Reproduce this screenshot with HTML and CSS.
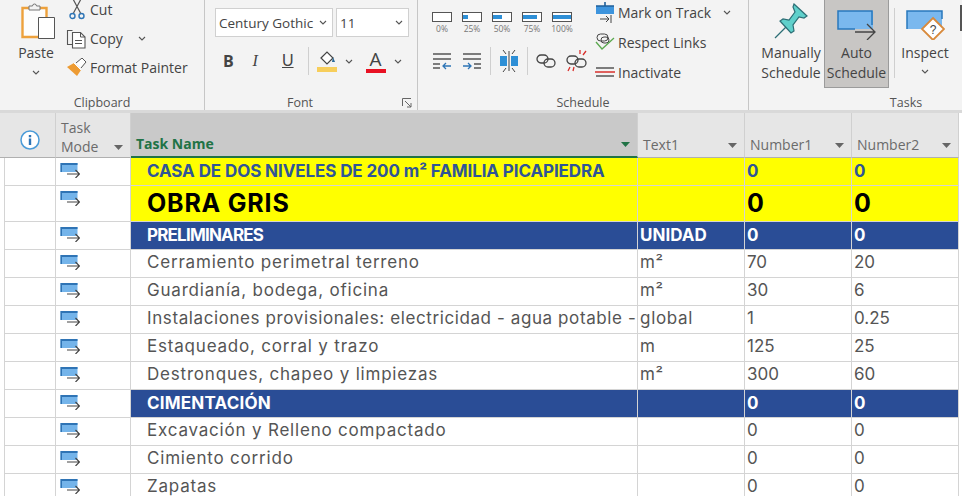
FILE: index.html
```html
<!DOCTYPE html>
<html lang="en">
<head>
    <meta charset="UTF-8">
    <title>Project - Task Sheet</title>
    <link rel="stylesheet" href="styles.css">
</head>
<body>
    <svg class="defs" width="0" height="0">
        <symbol id="mode" viewBox="0 0 20 16">
            <path d="M0.5 1h17v9h-17z" fill="#74b4ea"/>
            <path d="M0.5 1h17v2h-17zM0.5 1h1.500v9h-1.500z" fill="#2f74b5"/>
            <path d="M7 12h12.500M15.500 8l4 4-4 4" fill="none" stroke="#444" stroke-width="1.200"/>
        </symbol>
        <symbol id="chev" viewBox="0 0 8 5">
            <path d="M1 1l3 3 3-3" fill="none" stroke="#555" stroke-width="1.100"/>
        </symbol>
        <symbol id="sort" viewBox="0 0 9 5">
            <path d="M0 0h9L4.500 5z" fill="#666"/>
        </symbol>
    </svg>

    <div class="ribbon">
        <section class="group group-clipboard">
            <div class="group-body">
                <div class="big-btn paste-btn">
                    <svg class="paste-icon" width="34" height="37" viewBox="0 0 34 37">
                        <path d="M1.500 6h24v29h-24z" fill="#fdfdfd" stroke="#eda13c" stroke-width="2.400"/>
                        <path d="M8 8V4h3.500a2 2 0 0 1 4 0H19v4z" fill="#f3f3f3" stroke="#777"/>
                        <path d="M17.500 15.500h16v21h-16z" fill="#fff" stroke="#555"/>
                    </svg>
                    <span class="big-label">Paste</span>
                    <svg class="chev"><use href="#chev"/></svg>
                </div>
                <div class="small-col">
                    <div class="small-btn">
                        <svg width="16" height="21" viewBox="0 0 16 21"><path d="M4 0l7.500 14M12 0L4.500 14" stroke="#555" stroke-width="1.200" fill="none"/><circle cx="3.500" cy="17" r="2.500" fill="none" stroke="#2e75b6" stroke-width="1.400"/><circle cx="12.500" cy="17" r="2.500" fill="none" stroke="#2e75b6" stroke-width="1.400"/></svg>
                        <span>Cut</span>
                    </div>
                    <div class="small-btn">
                        <svg width="20" height="20" viewBox="0 0 20 20"><path d="M5.500 1.500H.5v14h5" fill="none" stroke="#555" stroke-width="1.100"/><path d="M5.500 3.500h8l4.500 4.500v11H5.500z" fill="#fff" stroke="#555" stroke-width="1.100"/><path d="M13.500 3.500V8H18M8 11.500h7M8 14.500h7" fill="none" stroke="#555"/></svg>
                        <span>Copy</span>
                        <svg class="chev chev-copy"><use href="#chev"/></svg>
                    </div>
                    <div class="small-btn">
                        <svg width="20" height="19" viewBox="0 0 20 19"><path d="M0 9l7-4 7 7-4 6z" fill="#ed9b33"/><path d="M7 5l7 7" stroke="#fff"/><path d="M9 5l6-5 4 4-5 6" fill="#fff" stroke="#555"/></svg>
                        <span>Format Painter</span>
                    </div>
                </div>
            </div>
            <div class="group-label">Clipboard</div>
        </section>

        <section class="group group-font">
            <div class="group-body font-body">
                <div class="combo-row">
                    <div class="combo combo-name"><span>Century Gothic</span><svg class="chev"><use href="#chev"/></svg></div>
                    <div class="combo combo-size"><span>11</span><svg class="chev"><use href="#chev"/></svg></div>
                </div>
                <div class="format-row">
                    <span class="fmt fmt-b">B</span>
                    <span class="fmt fmt-i">I</span>
                    <span class="fmt fmt-u">U</span>
                    <i class="vsep"></i>
                    <svg class="fill-icon" width="20" height="24" viewBox="0 0 20 24"><path d="M4 9l6-6 6 6-6 6z" fill="#fff" stroke="#444" stroke-width="1.200"/><path d="M16 8l2 5h-3z" fill="#2b6a99"/><path d="M0 18h20v5H0z" fill="#f7ce5b"/></svg>
                    <svg class="chev"><use href="#chev"/></svg>
                    <span class="font-color">A</span>
                    <svg class="chev"><use href="#chev"/></svg>
                </div>
            </div>
            <div class="group-label">Font
                <svg class="launcher" width="10" height="10" viewBox="0 0 10 10"><path d="M.5 8V.5H9M3 3l6 6M9 5v4H5" fill="none" stroke="#666"/></svg>
            </div>
        </section>

        <section class="group group-schedule">
            <div class="group-body schedule-body">
                <div class="schedule-left">
                    <div class="pct-row">
                        <div class="pct"><i class="bar"></i><span>0%</span></div>
                        <div class="pct"><i class="bar"><b class="p25"></b></i><span>25%</span></div>
                        <div class="pct"><i class="bar"><b class="p50"></b></i><span>50%</span></div>
                        <div class="pct"><i class="bar"><b class="p75"></b></i><span>75%</span></div>
                        <div class="pct"><i class="bar"><b class="p100"></b></i><span>100%</span></div>
                    </div>
                    <div class="tool-row">
                        <svg width="20" height="18" viewBox="0 0 20 18"><path d="M1 2h18M1 7h18M1 12h7M1 16h7" stroke="#555" stroke-width="1.400"/><path d="M19 14h-8M14 11l-3 3 3 3" stroke="#2e75b6" stroke-width="1.300" fill="none"/></svg>
                        <svg class="tool-gap" width="20" height="18" viewBox="0 0 20 18"><path d="M1 2h18M1 7h18M12 12h7M12 16h7" stroke="#555" stroke-width="1.400"/><path d="M1 14h8M6 11l3 3-3 3" stroke="#2e75b6" stroke-width="1.300" fill="none"/></svg>
                        <i class="vsep"></i>
                        <svg width="20" height="24" viewBox="0 0 20 24"><path d="M1 7h7v10H1zM12 7h7v10h-7z" fill="#2e8fd6"/><path d="M4 1l3 4M16 1l-3 4M4 23l3-4M16 23l-3-4M10 2v20" stroke="#444"/></svg>
                        <i class="vsep"></i>
                        <svg class="link-icon" width="20" height="14" viewBox="0 0 20 14"><rect x="1" y="1" width="11" height="8" rx="4" fill="none" stroke="#444" stroke-width="1.300"/><rect x="8" y="5" width="11" height="8" rx="4" fill="none" stroke="#444" stroke-width="1.300"/></svg>
                        <svg class="break-icon" width="22" height="22" viewBox="0 0 22 22"><rect x="1" y="6" width="11" height="8" rx="4" fill="none" stroke="#444" stroke-width="1.300"/><rect x="9" y="9" width="11" height="8" rx="4" fill="none" stroke="#444" stroke-width="1.300"/><path d="M14 0v4M20 1l-3 4M2 21l2-4M7 21l1-4" stroke="#d9302c" stroke-width="1.300"/></svg>
                    </div>
                </div>
                <div class="small-col schedule-col">
                    <div class="small-btn">
                        <svg width="20" height="21" viewBox="0 0 20 21"><path d="M1 4h18v8H1z" fill="#3d94dd"/><path d="M1 4h18M10 0v4" stroke="#1f5f99" stroke-width="1.600"/><path d="M5 17h9M11 14l3 3-3 3M16 13v8" stroke="#444" fill="none"/></svg>
                        <span>Mark on Track</span>
                        <svg class="chev chev-track"><use href="#chev"/></svg>
                    </div>
                    <div class="small-btn">
                        <svg width="20" height="18" viewBox="0 0 20 18"><rect x="2" y="1" width="11" height="7" rx="3.500" fill="none" stroke="#444"/><rect x="6" y="4" width="8" height="6" rx="3" fill="none" stroke="#444"/><path d="M1 9l6 7L19 5" fill="none" stroke="#5aa84e" stroke-width="1.300"/></svg>
                        <span>Respect Links</span>
                    </div>
                    <div class="small-btn">
                        <svg width="20" height="12" viewBox="0 0 20 12"><path d="M1 2h18M1 10h18" stroke="#555" stroke-width="1.500"/><path d="M0 6h20" stroke="#d9302c" stroke-width="1.500"/></svg>
                        <span>Inactivate</span>
                    </div>
                </div>
            </div>
            <div class="group-label">Schedule</div>
        </section>

        <section class="group group-tasks">
            <div class="group-body tasks-body">
                <div class="big-btn manual-btn">
                    <svg class="pin-icon" width="34" height="36" viewBox="0 0 34 36"><path d="M20 1l13 12-3 2-5-1-6 8 1 6-3 2L6 18l3-2 6 1 6-8-2-5z" fill="#5fd0cb" stroke="#2c6e75" stroke-width="1.200"/><path d="M12 24L1 35" stroke="#2c6e75" stroke-width="1.200"/></svg>
                    <span class="big-label">Manually<br>Schedule</span>
                </div>
                <div class="big-btn auto-btn">
                    <svg class="sched-icon" width="39" height="30" viewBox="0 0 39 30"><path d="M1 1h35v18H1z" fill="#7ab8ee"/><path d="M18 19H1V1h34v14" fill="none" stroke="#2878bd" stroke-width="1.500"/><path d="M18 22h20M30 14l8 8-8 8" fill="none" stroke="#444" stroke-width="1.300"/></svg>
                    <span class="big-label">Auto<br>Schedule</span>
                </div>
                <i class="vsep"></i>
                <div class="big-btn inspect-btn">
                    <svg class="sched-icon" width="39" height="30" viewBox="0 0 39 30"><path d="M1 1h35v18H1z" fill="#7ab8ee"/><path d="M1 19V1h35v8" fill="none" stroke="#2878bd" stroke-width="1.500"/><path d="M27 8l11 11-11 11-11-11z" fill="#fff" stroke="#d88a3c" stroke-width="1.800"/><text x="27" y="23.500" font-size="12" text-anchor="middle" fill="#444" font-family="Liberation Sans">?</text></svg>
                    <span class="big-label">Inspect</span>
                    <svg class="chev"><use href="#chev"/></svg>
                </div>
                <i class="cut-icon"></i>
            </div>
            <div class="group-label">Tasks</div>
        </section>
    </div>

    <div class="sheet">
        <div class="row head">
            <div class="cell c-info">
                <svg width="20" height="20" viewBox="0 0 20 20"><circle cx="10" cy="10" r="9" fill="#fff" stroke="#4a9bd8" stroke-width="1.500"/><rect x="8.800" y="8.500" width="2.400" height="6.500" fill="#2e75b6"/><rect x="8.800" y="5" width="2.400" height="2.300" fill="#2e75b6"/></svg>
            </div>
            <div class="cell c-mode"><span>Task<br>Mode</span><svg class="sort"><use href="#sort"/></svg></div>
            <div class="cell c-name"><span>Task Name</span><svg class="sort sort-green" viewBox="0 0 9 5"><path d="M0 0h9L4.500 5z"/></svg></div>
            <div class="cell"><span>Text1</span><svg class="sort"><use href="#sort"/></svg></div>
            <div class="cell"><span>Number1</span><svg class="sort"><use href="#sort"/></svg></div>
            <div class="cell"><span>Number2</span><svg class="sort"><use href="#sort"/></svg></div>
        </div>

        <div class="row title">
            <div class="cell c-info"></div><div class="cell c-mode"><svg class="mode-icon"><use href="#mode"/></svg></div>
            <div class="cell c-name">CASA DE DOS NIVELES DE 200 m² FAMILIA PICAPIEDRA</div><div class="cell"></div><div class="cell">0</div><div class="cell">0</div>
        </div>
        <div class="row big">
            <div class="cell c-info"></div><div class="cell c-mode"><svg class="mode-icon"><use href="#mode"/></svg></div>
            <div class="cell c-name">OBRA GRIS</div><div class="cell"></div><div class="cell">0</div><div class="cell">0</div>
        </div>
        <div class="row phase">
            <div class="cell c-info"></div><div class="cell c-mode"><svg class="mode-icon"><use href="#mode"/></svg></div>
            <div class="cell c-name c-tight">PRELIMINARES</div><div class="cell">UNIDAD</div><div class="cell">0</div><div class="cell">0</div>
        </div>
        <div class="row plain">
            <div class="cell c-info"></div><div class="cell c-mode"><svg class="mode-icon"><use href="#mode"/></svg></div>
            <div class="cell c-name">Cerramiento perimetral terreno</div><div class="cell">m²</div><div class="cell">70</div><div class="cell">20</div>
        </div>
        <div class="row plain">
            <div class="cell c-info"></div><div class="cell c-mode"><svg class="mode-icon"><use href="#mode"/></svg></div>
            <div class="cell c-name">Guardianía, bodega, oficina</div><div class="cell">m²</div><div class="cell">30</div><div class="cell">6</div>
        </div>
        <div class="row plain">
            <div class="cell c-info"></div><div class="cell c-mode"><svg class="mode-icon"><use href="#mode"/></svg></div>
            <div class="cell c-name c-fit">Instalaciones provisionales: electricidad - agua potable -</div><div class="cell">global</div><div class="cell">1</div><div class="cell">0.25</div>
        </div>
        <div class="row plain">
            <div class="cell c-info"></div><div class="cell c-mode"><svg class="mode-icon"><use href="#mode"/></svg></div>
            <div class="cell c-name">Estaqueado, corral y trazo</div><div class="cell">m</div><div class="cell">125</div><div class="cell">25</div>
        </div>
        <div class="row plain">
            <div class="cell c-info"></div><div class="cell c-mode"><svg class="mode-icon"><use href="#mode"/></svg></div>
            <div class="cell c-name">Destronques, chapeo y limpiezas</div><div class="cell">m²</div><div class="cell">300</div><div class="cell">60</div>
        </div>
        <div class="row phase">
            <div class="cell c-info"></div><div class="cell c-mode"><svg class="mode-icon"><use href="#mode"/></svg></div>
            <div class="cell c-name">CIMENTACIÓN</div><div class="cell"></div><div class="cell">0</div><div class="cell">0</div>
        </div>
        <div class="row plain">
            <div class="cell c-info"></div><div class="cell c-mode"><svg class="mode-icon"><use href="#mode"/></svg></div>
            <div class="cell c-name">Excavación y Relleno compactado</div><div class="cell"></div><div class="cell">0</div><div class="cell">0</div>
        </div>
        <div class="row plain">
            <div class="cell c-info"></div><div class="cell c-mode"><svg class="mode-icon"><use href="#mode"/></svg></div>
            <div class="cell c-name">Cimiento corrido</div><div class="cell"></div><div class="cell">0</div><div class="cell">0</div>
        </div>
        <div class="row plain">
            <div class="cell c-info"></div><div class="cell c-mode"><svg class="mode-icon"><use href="#mode"/></svg></div>
            <div class="cell c-name">Zapatas</div><div class="cell"></div><div class="cell">0</div><div class="cell">0</div>
        </div>
    </div>
</body>
</html>
```

FILE: styles.css
```css
* {
    margin: 0;
    padding: 0;
    box-sizing: border-box;
}

html, body {
    height: 496px;
    overflow: hidden;
}

body {
    font-family: "Open Sans", "Noto Sans", sans-serif;
    font-size: 14px;
    color: #444;
    background: #fff;
}

.defs {
    position: absolute;
}

svg {
    display: block;
    flex: none;
}

/* ribbon */
.ribbon {
    display: flex;
    height: 113px;
    background: #f3f3f3;
    border-bottom: 3px solid #d9d9d9;
    overflow: hidden;
}

.group {
    display: flex;
    flex-direction: column;
    flex: none;
    height: 110px;
    border-right: 1px solid #c6c6c6;
}

.group-clipboard { width: 205px; }
.group-font { width: 213px; }
.group-schedule { width: 331px; }
.group-tasks { width: 314px; border-right: 0; }

.group-body {
    display: flex;
    height: 95px;
    flex: none;
}

.group-label {
    position: relative;
    text-align: center;
    font-size: 12.500px;
    line-height: 15px;
    color: #555;
}

.group-font .group-label {
    padding-right: 22px;
}

.launcher {
    position: absolute;
    right: 5px;
    top: 3px;
}

.big-btn {
    display: flex;
    flex-direction: column;
    align-items: center;
    flex: none;
}

.big-label {
    font-size: 14px;
    line-height: 20px;
    text-align: center;
    white-space: nowrap;
}

.chev {
    width: 8px;
    height: 5px;
}

.paste-btn {
    width: 44px;
    margin-left: 14px;
    padding-top: 2px;
}

.paste-icon {
    margin: 0 0 4px 4px;
}

.paste-btn .chev {
    margin-top: 7px;
}

.small-col {
    display: flex;
    flex-direction: column;
    margin-top: -5px;
}

.small-btn {
    display: flex;
    align-items: center;
    height: 29px;
    font-size: 14px;
    white-space: nowrap;
}

.small-btn > svg:first-child {
    width: 22px;
}

.group-clipboard .small-col {
    margin-left: 8px;
}

.small-btn > span {
    margin-left: 2px;
}

.chev-copy {
    margin-left: 15px;
}

/* font group */
.font-body {
    flex-direction: column;
    padding: 8px 0 0 10px;
}

.combo-row {
    display: flex;
    gap: 3px;
}

.combo {
    display: flex;
    align-items: center;
    justify-content: space-between;
    height: 29px;
    padding: 0 5px 0 3px;
    background: #fff;
    border: 1px solid #d0d0d0;
    font-size: 13.500px;
}

.combo-name { width: 118px; }
.combo-size { width: 73px; }

.format-row {
    display: flex;
    align-items: center;
    height: 26px;
    margin-top: 11px;
}

.fmt {
    width: 29.500px;
    padding-left: 8px;
    font-size: 16px;
    font-family: "Liberation Sans", sans-serif;
}

.fmt-b { font-weight: bold; font-family: "Open Sans", sans-serif; }
.fmt-i { font-style: italic; font-family: "Liberation Serif", serif; }
.fmt-u { text-decoration: underline; }

.vsep {
    display: block;
    flex: none;
    width: 1px;
    height: 28px;
    background: #cfcfcf;
}

.format-row .vsep {
    margin-left: 4px;
}

.fill-icon {
    margin-left: 8px;
}

.format-row .chev {
    margin-left: 8px;
}

.font-color {
    width: 20px;
    margin-left: 13px;
    border-bottom: 4px solid #e81123;
    font-size: 19px;
    line-height: 20px;
    text-align: center;
}

/* schedule group */
.schedule-body {
    padding-left: 14px;
}

.schedule-left {
    width: 162px;
}

.pct-row {
    display: flex;
    gap: 10px;
    padding-top: 12px;
}

.pct {
    width: 20px;
    display: flex;
    flex-direction: column;
    align-items: center;
    font-size: 8.500px;
    line-height: 11px;
    color: #777;
    white-space: nowrap;
}

.pct .bar {
    display: flex;
    align-items: center;
    width: 20px;
    height: 10px;
    margin-bottom: 1px;
    background: #fff;
    border: 1px solid #555;
}

.pct .bar b {
    display: block;
    height: 4px;
    background: #2e8fd6;
}

.p25 { width: 25%; }
.p50 { width: 50%; }
.p75 { width: 75%; }
.p100 { width: 100%; }

.tool-row {
    display: flex;
    align-items: center;
    height: 28px;
    margin-top: 13px;
}

.tool-gap {
    margin-left: 10px;
}

.tool-row .vsep {
    margin: 0 8px;
}

.break-icon {
    margin-left: 10px;
}

.schedule-col {
    margin-top: -3px;
}

.schedule-col .small-btn {
    height: 30px;
}

.chev-track {
    margin-left: 12px;
}

/* tasks group */
.tasks-body {
    padding-left: 9px;
}

.tasks-body .vsep {
    margin: 8px 1px 0 5px;
    height: 70px;
}

.pin-icon {
    margin: 3px 0 4px;
}

.sched-icon {
    margin: 10px 0 3px;
}

.manual-btn {
    width: 66px;
}

.auto-btn {
    width: 65px;
    height: 88px;
    background: #c8c6c4;
    border: 1px solid #9b9b9b;
    border-top: 0;
}

.inspect-btn {
    width: 58px;
}

.inspect-btn .chev {
    margin-top: 6px;
}

.cut-icon {
    display: block;
    flex: none;
    width: 6px;
    height: 26px;
    margin: 5px 0 0 6px;
    background: #555;
}

/* task sheet */
.sheet {
    font-family: "Inter", "Lato", sans-serif;
}

.row {
    display: grid;
    grid-template-columns: 56px 75px 507px 107px 107px 107px 3px;
    height: 28px;
    font-size: 17px;
    line-height: 27px;
    color: #555;
    background: #fff;
}

.cell {
    padding-left: 2px;
    border-right: 1px solid #d4d4d4;
    border-bottom: 1px solid #d4d4d4;
    white-space: nowrap;
    overflow: hidden;
}

.c-info {
    margin-left: 4px;
    border-left: 1px solid #d4d4d4;
}

.c-mode {
    padding-left: 4px;
}

.c-name {
    padding-left: 16px;
    letter-spacing: 0.800px;
}

.plain {
    line-height: 25px;
}

.plain .c-fit {
    letter-spacing: 0.600px;
}

.plain .cell:nth-child(4) {
    letter-spacing: 0.700px;
}

.mode-icon {
    width: 20px;
    height: 16px;
    margin-top: 4px;
}

.head {
    height: 45px;
    font-family: "Open Sans", sans-serif;
    font-size: 14px;
    line-height: 19px;
    color: #6b6b6b;
}

.head .cell {
    display: flex;
    align-items: flex-end;
    justify-content: space-between;
    padding: 0 7px 3px 5px;
    background: #e6e6e6;
    border-color: #d0d0d0;
    border-bottom-color: #b0b0b0;
}

.head .c-info {
    align-items: center;
    justify-content: center;
    margin-left: 0;
    border-left: 0;
    padding: 9px 0 0 4px;
}

.head .c-mode {
    padding-bottom: 1px;
}

.head .c-name {
    padding-left: 5px;
    font-weight: bold;
    font-size: 14px;
    letter-spacing: 0;
    color: #217346;
    background: #c9c9c9;
    border-bottom: 2px solid #217346;
}

.sort {
    width: 9px;
    height: 5px;
    margin-bottom: 6px;
}

.sort-green {
    fill: #217346;
}

.title .cell {
    background: #ffff00;
    font-weight: bold;
    color: #2f5597;
}

.title .c-name {
    letter-spacing: -0.100px;
}

.big {
    height: 36px;
    font-size: 25px;
    line-height: 35px;
}

.big .cell {
    background: #ffff00;
    font-weight: bold;
    color: #000;
}

.big .c-name {
    letter-spacing: 0.800px;
}

.phase .cell {
    background: #2a4d96;
    font-weight: bold;
    color: #fff;
}

.phase .c-name {
    letter-spacing: 0.200px;
}

.phase .c-tight {
    letter-spacing: -0.800px;
}

.row:not(.head) .c-info,
.row:not(.head) .c-mode {
    background: #fff;
}
```
